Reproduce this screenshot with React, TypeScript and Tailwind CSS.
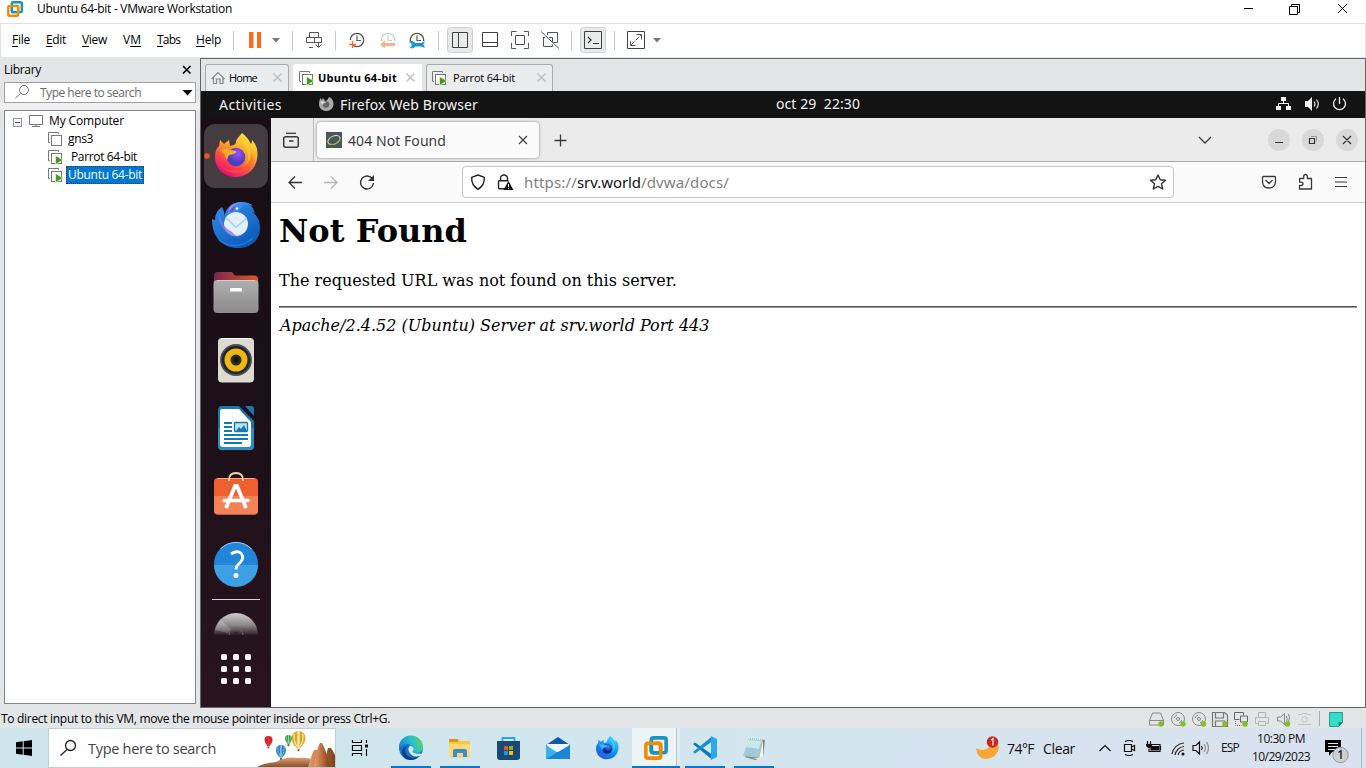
import React, { useLayoutEffect, useRef } from 'react';

const UI = "font-['Open_Sans',sans-serif]";
const GN = "font-['Noto_Sans',sans-serif]";

/* Text whose letter spacing is tuned so that it spans w pixels. */
function Fit({ w, className = '', children }: { w: number; className?: string; children: React.ReactNode }) {
  const box = useRef<HTMLSpanElement>(null);
  useLayoutEffect(() => {
    const el = box.current;
    if (!el) return;
    const tune = () => {
      el.style.letterSpacing = '0px';
      const n = (el.textContent || '').length;
      const natural = el.getBoundingClientRect().width;
      el.style.letterSpacing = `${(w - natural) / n}px`;
    };
    tune();
    document.fonts?.ready.then(tune);
  }, [w]);
  return (
    <span ref={box} className={`inline-block shrink-0 whitespace-pre ${className}`}>
      {children}
    </span>
  );
}

/* Icon cell: its drawing uses window coordinates through the viewBox. */
function Ic({ b, className = '', children }: { b: [number, number, number, number]; className?: string; children?: React.ReactNode }) {
  return (
    <svg width={b[2]} height={b[3]} viewBox={b.join(' ')} fill="none" className={`block shrink-0 ${className}`}>
      {children}
    </svg>
  );
}

const Clock = ({ x, c }: { x: number; c: string }) => (
  <>
    <circle cx={x} cy="40" r="6.7" stroke={c} strokeWidth="1.3" />
    <path d={`M${x} 35.5V40.5H${x + 4}`} stroke={c} strokeWidth="1.2" />
  </>
);

function Stack({ x, y, run = true }: { x: number; y: number; run?: boolean }) {
  return (
    <>
      <path d={`M${x + 2} ${y + 10.5}H${x + 0.5}V${y + 0.5}H${x + 10.5}V${y + 2}`} stroke="#777" />
      <rect x={x + 3.5} y={y + 3.5} width="10" height="10" fill="#fff" stroke="#777" />
      {run && <path d={`M${x + 7.5} ${y + 5.5}L${x + 15} ${y + 10}L${x + 7.5} ${y + 14.5}Z`} fill="#3f9c12" stroke="#fff" strokeWidth="0.6" />}
    </>
  );
}

const VmLogo = ({ x, y, s }: { x: number; y: number; s: number }) => (
  <g transform={`translate(${x} ${y}) scale(${s})`} strokeWidth="3.3">
    <rect x="6.7" y="1.7" width="13.6" height="13.6" rx="2" stroke="#1795c5" />
    <rect x="1.7" y="6.7" width="13.6" height="13.6" rx="2" stroke="#f38b00" />
    <path d="M6.7 8.4V13.3Q6.700 15.300 8.700 15.300H13.600" stroke="#1795c5" />
    <path d="M10 6.700H13.300Q15.300 6.700 15.300 8.700V13.600" stroke="#f38b00" />
  </g>
);

const FoxBody = ({ blue = false }: { blue?: boolean }) => (
  <>
    <defs>
      <linearGradient id={blue ? 'fb' : 'fo'} x1="0.85" y1="0.05" x2="0.3" y2="1">
        <stop offset="0" stopColor={blue ? '#37dbff' : '#ffe93e'} />
        <stop offset="0.45" stopColor={blue ? '#159cf5' : '#ff9a28'} />
        <stop offset="0.75" stopColor={blue ? '#1275e8' : '#ff3d4b'} />
        <stop offset="1" stopColor={blue ? '#3b4ed8' : '#e60a78'} />
      </linearGradient>
      <radialGradient id={blue ? 'gb' : 'go'} cx="0.6" cy="0.3">
        <stop offset="0" stopColor={blue ? '#3e8df5' : '#a44bff'} />
        <stop offset="1" stopColor={blue ? '#16218e' : '#4b3fc0'} />
      </radialGradient>
    </defs>
    <path d="M27 0C32 4 34 7 36 11C37 10 37 8 37 7C43 13 43 21 42 26C40 37 31 44 21 44C9 44 0 35 0 24C0 18 2 15 4 13L5 7L9 11L14 7L15 13C20 12 21 11 21 8C22 5 25 3 27 0Z" fill={blue ? 'url(#fb)' : 'url(#fo)'} />
    <circle cx="21" cy="24" r="9.3" fill={blue ? 'url(#gb)' : 'url(#go)'} />
    <path d="M5 17C11 15 16 17 21 18C22 20 19 21 15 22C13 22 13 24 12 27C10 24 11 21 5 17Z" fill={blue ? '#35bcff' : '#ffac24'} />
    <path d="M3 29C8 37 20 41 30 34C36 30 37 23 34 17C39 23 40 32 33 37C22 44 8 39 3 29Z" fill={blue ? '#158eff' : '#ff5b3c'} opacity=".5" />
    <path d="M27 2C26 9 32 13 33 20C34 24 33 29 30 32C37 27 37 17 33 12C30 8 28 6 27 2Z" fill={blue ? '#58e2ff' : '#ffd92e'} opacity=".7" />
  </>
);

const Sep = ({ x, y, h }: { x: number; y: number; h: number }) => <path d={`M${x + 0.5} ${y}v${h}`} stroke="#c9c9c9" />;

function Title() {
  return (
    <div className={`flex h-[23px] shrink-0 bg-white text-[12px] leading-[18px] text-black ${UI}`}>
      <Ic b={[0, 0, 37, 23]}><VmLogo x={7} y={1} s={0.73} /></Ic>
      <Fit w={195}>Ubuntu 64-bit - VMware Workstation</Fit>
      <div className="flex-1" />
      <Ic b={[1230, 0, 136, 23]}>
        <path d="M1244 8.500h9" stroke="#000" />
        <path d="M1289.500 6.500h8v8h-8zM1291.500 6v-1.500h8v8h-2" stroke="#000" />
        <path d="M1338 4l9 9M1347 4l-9 9" stroke="#000" />
      </Ic>
    </div>
  );
}

function Toolbar() {
  const m = 'leading-[32px]';
  return (
    <div className={`flex h-[34px] shrink-0 border border-b-0 border-[#e0e0e0] bg-white text-[12px] text-black ${UI}`}>
      <Fit w={18} className={`ml-[11px] ${m}`}><u className="underline-offset-2">F</u>ile</Fit>
      <Fit w={20} className={`ml-4 ${m}`}><u className="underline-offset-2">E</u>dit</Fit>
      <Fit w={25} className={`ml-4 ${m}`}><u className="underline-offset-2">V</u>iew</Fit>
      <Fit w={18} className={`ml-4 ${m}`}>V<u className="underline-offset-2">M</u></Fit>
      <Fit w={23} className={`ml-4 ${m}`}><u className="underline-offset-2">T</u>abs</Fit>
      <Fit w={25} className={`ml-4 ${m}`}><u className="underline-offset-2">H</u>elp</Fit>
      <Ic b={[221, 24, 79, 33]}>
        <Sep x={233} y={31} h={19} />
        <path d="M249 32h4.500v16h-4.500zM257 32h4v16h-4z" fill="#ff681c" />
        <path d="M272 38h8l-4 4.500z" fill="#777" />
        <Sep x={292} y={31} h={19} />
      </Ic>
      <Ic b={[300, 24, 42, 33]}>
        <path d="M309.500 37v-4.500h9v4.500M306.500 37.500h15v5h-15zM314.500 37.500v5M318.500 42v5M309 47.500h4M315.500 44.500l3 3 3-3" stroke="#555" />
        <Sep x={335} y={31} h={19} />
      </Ic>
      <Ic b={[342, 24, 30, 33]}>
        <Clock x={357} c="#555" />
        <path d="M347 40h6v9h-6z" fill="#fff" />
        <path d="M349 44.500h7M352.500 41v7" stroke="#ff681c" strokeWidth="1.400" />
      </Ic>
      <Ic b={[372, 24, 30, 33]}>
        <Clock x={388} c="#ccc" />
        <path d="M379 41h18v7h-18z" fill="#fff" />
        <path d="M380 44.500l5-4v2.500h10v3h-10v2.500z" fill="#ffae83" />
      </Ic>
      <Ic b={[402, 24, 44, 33]}>
        <Clock x={417} c="#555" />
        <path d="M408 41h18v8h-18z" fill="#fff" />
        <path d="M409.500 41h3l3 2h6l3-2v2l-1.500 1.500 1.500 1.500v2l-3-1.500h-6l-3 2-3-.5 2-1.500v-3l-2-1z" fill="#1995dc" />
        <Sep x={438} y={31} h={19} />
      </Ic>
      <Ic b={[446, 24, 130, 33]}>
        <rect x="447.500" y="27.500" width="25" height="25" rx="3" fill="#e9ebeb" stroke="#d0d0d0" />
        <path d="M452.500 32.500h15v15h-15zM458.500 32v16" stroke="#414141" />
        <path d="M482.500 32.500h15v14h-15zM482 42.500h16" stroke="#414141" />
        <path d="M511.500 36v-4.500h5M524 31.500h4.500v4.500M528.500 43v5.500h-4.500M516 48.500h-4.500v-5.500M515.500 35.500h9v9h-9z" stroke="#555" />
        <path d="M547.500 35v-2.500h10v10h-4M549 37.500h3.500v5M543.500 37v9.500h9v-2M543 37.500h2M541 31.500l18 17" stroke="#485760" />
        <Sep x={571} y={31} h={19} />
      </Ic>
      <Ic b={[576, 24, 100, 33]}>
        <rect x="580.500" y="27.500" width="25" height="25" rx="3" fill="#e9ebeb" stroke="#d0d0d0" />
        <path d="M584.500 31.500h17v17h-17z" stroke="#414141" /><path d="M588 37l3 3-3 3M593 43.500h6" stroke="#333" strokeWidth="1.200" />
        <Sep x={614} y={31} h={19} />
        <path d="M627.500 31.500h17v17h-17z" stroke="#414141" />
        <path d="M631 45l10-10" stroke="#555" strokeDasharray="5 1.500" /><path d="M636.500 34.500h5v5M630.500 41v4.500h5" stroke="#555" />
        <path d="M653 38h8l-4 4.500z" fill="#777" />
      </Ic>
    </div>
  );
}

function Library() {
  return (
    <div className={`flex w-[200px] shrink-0 flex-col bg-[#e3e5e7] text-[12px] text-black ${UI}`}>
      <div className="flex h-[25px] shrink-0 pl-1 leading-[26px]">
        <Fit w={37}>Library</Fit>
        <div className="flex-1" />
        <Ic b={[175, 57, 25, 25]}><path d="M183 66l7.500 7.500M190.500 66l-7.500 7.500" stroke="#000" strokeWidth="1.600" /></Ic>
      </div>
      <div className="ml-1 flex h-[21px] w-[192px] shrink-0 border border-[#a2a2a2] bg-white leading-[20px] text-[#6a6a6a]">
        <Ic b={[5, 83, 35, 19]}><circle cx="24" cy="90" r="4.500" stroke="#777" /><path d="M20.500 93.500l-5 4.500" stroke="#777" /></Ic>
        <Fit w={101}>Type here to search</Fit>
        <div className="flex-1" />
        <Ic b={[177, 83, 18, 19]}><path d="M182.500 90h10l-5 5.500z" fill="#000" /></Ic>
      </div>
      <div className="h-[7px] shrink-0 bg-[#f0f0f0]" />
      <div className="ml-1 flex h-[594px] w-[192px] shrink-0 flex-col border border-[#828790] bg-white pt-px">
        <div className="flex h-[18px] leading-[18px]">
          <Ic b={[5, 112, 44, 18]}>
            <rect x="13.500" y="118.500" width="8" height="8" fill="#f7f7f7" stroke="#999" /><path d="M15 122.500h5" stroke="#3156a7" />
            <path d="M29.500 115.500h13v9h-13zM36 125v2M32 126.500h8" stroke="#777" />
          </Ic>
          <Fit w={75}>My Computer</Fit>
        </div>
        <div className="flex h-[18px] leading-[18px]">
          <Ic b={[5, 130, 63, 18]}><Stack x={48} y={132} run={false} /></Ic>
          <Fit w={25}>gns3</Fit>
        </div>
        <div className="flex h-[18px] leading-[18px]">
          <Ic b={[5, 148, 66, 18]}><Stack x={48} y={150} /></Ic>
          <Fit w={66}>Parrot 64-bit</Fit>
        </div>
        <div className="flex h-[18px] leading-[16px]">
          <Ic b={[5, 166, 61, 18]}><Stack x={48} y={168} /></Ic>
          <div className="h-[18px] w-[78px] border border-dotted border-[#4a3a20] bg-[#0078d7] pl-px text-white"><Fit w={74}>Ubuntu 64-bit</Fit></div>
        </div>
      </div>
    </div>
  );
}

const TabX = ({ x }: { x: number }) => <path d={`M${x} 73.500l8 8M${x + 8} 73.500l-8 8`} stroke="#c4c4c4" strokeWidth="1.700" />;

function VmTabs() {
  const t = 'h-[27px] flex shrink-0 rounded-t-[3px] border border-b-0 leading-[26px]';
  return (
    <div className={`flex h-8 shrink-0 bg-[#e3e4e6] pl-1 pt-[5px] text-[11px] text-black ${UI}`}>
      <div className={`${t} w-[84px] border-[#a9abad] bg-[#ebecee]`}>
        <Ic b={[206, 65, 23, 26]}><path d="M211.500 79l6.500-6.500 6.500 6.500M213.500 77.500v6h3v-4.500h3.500v4.500h3v-6" stroke="#888" strokeWidth="1.200" /></Ic>
        <Fit w={28}>Home</Fit>
        <Ic b={[257, 65, 28, 26]}><TabX x={273.500} /></Ic>
      </div>
      <div className={`${t} ml-1 w-[129px] border-white bg-white font-bold`}>
        <Ic b={[294, 65, 24, 26]}><Stack x={299} y={71} /></Ic>
        <Fit w={79}>Ubuntu 64-bit</Fit>
        <Ic b={[397, 65, 24, 26]}><TabX x={406.500} /></Ic>
      </div>
      <div className={`${t} ml-1 w-[127px] border-[#a9abad] bg-[#ebecee]`}>
        <Ic b={[427, 65, 26, 26]}><Stack x={432} y={71} /></Ic>
        <Fit w={62}>Parrot 64-bit</Fit>
        <Ic b={[515, 65, 36, 26]}><TabX x={537.500} /></Ic>
      </div>
    </div>
  );
}

function TopBar() {
  return (
    <div className={`flex h-[27px] shrink-0 bg-[#131313] text-[14px] leading-[27px] text-[#f2f2f2] ${GN}`}>
      <Fit w={63} className="ml-[18px]">Activities</Fit>
      <Ic b={[282, 91, 58, 27]}>
        <path d="M329 97c3 1 4.500 4 4.500 7 0 4-3 7-7.200 7s-7.300-3-7.300-7c0-3 1-4 1-6l2 2 1-2 2 3c2 0 3-2 4-4z" fill="#aaa" />
        <circle cx="326" cy="104.500" r="3.300" fill="#666" /><path d="M320 102c2-1 4 0 6 0-1 1-3 1-3 3-1-1-1-2-3-3z" fill="#ddd" />
      </Ic>
      <Fit w={138}>Firefox Web Browser</Fit>
      <Fit w={84} className="ml-[298px] leading-[26px]">oct 29  22:30</Fit>
      <div className="flex-1" />
      <Ic b={[1265, 91, 100, 27]}>
        <path d="M1281 97h5v4h-5zM1276 106h5v4h-5zM1286 106h5v4h-5z" fill="#f2f2f2" /><path d="M1283.500 101v3M1278.500 107v-3.500h10v3.500" stroke="#f2f2f2" />
        <path d="M1305 101h3l4-4v14l-4-4h-3z" fill="#f2f2f2" /><path d="M1314 101.500q2 2.500 0 5M1316.500 99.500q3.500 4.500 0 9" stroke="#ddd" strokeWidth="1.200" />
        <path d="M1336 98.800a6 6 0 1 0 7 0M1339.500 97v7" stroke="#f2f2f2" strokeWidth="1.300" />
      </Ic>
    </div>
  );
}

function Dock() {
  return (
    <div className="flex w-[70px] shrink-0 flex-col bg-gradient-to-b from-[#180e14] via-[#1b0f18] to-[#28141e]">
      <Ic b={[201, 118, 70, 76]}>
        <rect x="204" y="124" width="64" height="64" rx="11" fill="#453c42" />
        <circle cx="207" cy="156" r="2.800" fill="#e95420" />
        <g transform="translate(215 133)"><FoxBody /></g>
      </Ic>
      <Ic b={[201, 194, 70, 66]}>
        <defs><linearGradient id="tb" x1="0" y1="0" x2=".6" y2="1"><stop stopColor="#3590ee" /><stop offset="1" stopColor="#0c5bb9" /></linearGradient></defs>
        <path d="M212 219l3 1q0-9 7-13 3 5 2 10 3-14 16-15 12 0 15 11l-3-1q8 5 8 16c0 12-9 20-22 20-15 0-26-10-26-29z" fill="url(#tb)" />
        <path d="M228 213q1-10 13-11 8 0 12 4-7-3-11 0-2 5-7 6z" fill="#3d8df0" />
        <path d="M228 214q0-11 14-12-9 2-10 8z" fill="#9a8cf2" />
        <path d="M234 206l-6 6h5q3-3 1-6z" fill="#5e63c8" /><circle cx="237" cy="208.500" r="1.300" fill="#fff" />
        <circle cx="236" cy="224" r="12" fill="#e2f0ff" />
        <path d="M226.500 218l9.500 9.500 10.500-9.500" stroke="#a8cdf0" strokeWidth="1.600" />
        <path d="M219 212q-1 14 9 22 6 4 12 3-5-1-8-5-11-5-13-20z" fill="#8079de" opacity=".8" />
        <path d="M219 240q17 12 34-2" stroke="#2b86e8" strokeWidth="1.500" opacity=".7" />
      </Ic>
      <Ic b={[201, 260, 70, 66]}>
        <defs><linearGradient id="fd"><stop stopColor="#7b2852" /><stop offset="1" stopColor="#e2571d" /></linearGradient><linearGradient id="fg" x2="0" y2="1"><stop stopColor="#b0b0b0" /><stop offset="1" stopColor="#8b8b8b" /></linearGradient></defs>
        <path d="M214 276q0-4 4-4h14l3 3.500h19q4 0 4 4v16h-44z" fill="url(#fd)" />
        <rect x="213.500" y="280" width="45" height="33" rx="4" fill="url(#fg)" /><path d="M217 280.500h38" stroke="#d0d0d0" />
        <rect x="230" y="288" width="12" height="3.500" rx="1" fill="#fff" />
      </Ic>
      <Ic b={[201, 326, 70, 68]}>
        <rect x="218" y="338" width="36" height="44.500" rx="4" fill="#dfdbd0" /><path d="M221 338.500h30" stroke="#fff" />
        <circle cx="236" cy="360" r="16" fill="#4b4e56" /><circle cx="236" cy="360" r="14" fill="#20222b" /><circle cx="236" cy="360" r="11.500" fill="#edb90d" /><circle cx="236" cy="360" r="5.500" fill="#292929" /><circle cx="236" cy="360" r="2.500" fill="#111" />
      </Ic>
      <Ic b={[201, 394, 70, 68]}>
        <path d="M222 406h17l15 15v25q0 4-4 4h-28q-4 0-4-4v-36q0-4 4-4z" fill="#1678b0" /><path d="M218 428h36v18q0 4-4 4h-28q-4 0-4-4z" fill="#278fc6" />
        <path d="M245 406h6q3 0 3 3v7z" fill="#1678b0" />
        <path d="M222 409h17l12 13v22q0 3-3 3h-25q-3 0-3-3v-32q0-3 2-3z" fill="#fff" />
        <path d="M224 423h8M224 427h8M224 431h8M224 435h24M224 439h24M224 443h18" stroke="#1678b0" strokeWidth="1.800" />
        <rect x="234.500" y="422.500" width="13" height="9" rx="1" fill="#b8e2f6" stroke="#1678b0" strokeWidth="1.400" /><path d="M236 431l3-4 2 2 3-4 3 6z" fill="#1678b0" />
      </Ic>
      <Ic b={[201, 462, 70, 66]}>
        <rect x="214" y="478" width="44" height="36.500" rx="4" fill="#ef6031" /><path d="M214 496h44v14.500q0 4-4 4h-36q-4 0-4-4z" fill="#f48257" /><path d="M217 478.500h38" stroke="#ffa37c" />
        <path d="M229 481v-1q0-7 7-7t7 7v1" stroke="#ead5ac" strokeWidth="1.800" />
        <path d="M226 508l9-22h2l9 22" stroke="#fff" strokeWidth="3.800" /><path d="M224 500.500h24" stroke="#fff" strokeWidth="3.300" strokeLinecap="round" />
      </Ic>
      <Ic b={[201, 528, 70, 66]}>
        <circle cx="236" cy="564" r="22" fill="#2185d8" /><path d="M214 565h44a22 22 0 0 1-44 0z" fill="#3ea0e4" /><path d="M220.500 549a21.500 21.500 0 0 1 31 0" stroke="#9dcdf5" />
        <path d="M231 554q5-3.500 9-1.500 4 3 2 7.500-1 2-4 4.500-2 2-2 5" stroke="#fff" strokeWidth="2.800" /><circle cx="236" cy="575.500" r="2.500" fill="#fff" />
      </Ic>
      <Ic b={[201, 594, 70, 50]}>
        <defs><linearGradient id="cd" x2="0" y2="1"><stop stopColor="#cfcfcf" /><stop offset=".55" stopColor="#8c8789" /><stop offset="1" stopColor="#2c1d25" /></linearGradient></defs>
        <path d="M212 599.500h48" stroke="#d8d4d6" />
        <path d="M214 635a22 22 0 0 1 44 0z" fill="url(#cd)" /><path d="M220 619l11 10-3 4-13-3z" fill="#fff" opacity=".2" />
        <path d="M229 635a7 7 0 0 1 14 0" stroke="#6c6467" /><path d="M233 635a3 3 0 0 1 6 0z" fill="#30242a" />
      </Ic>
      <Ic b={[201, 644, 70, 63]}>
        {[221, 233, 245].map((x) => [654, 666, 678].map((y) => <rect key={`${x}-${y}`} x={x} y={y} width="6" height="6" rx="1.500" fill="#f4f2f2" />))}
      </Ic>
    </div>
  );
}

function Browser() {
  return (
    <div className="flex flex-1 flex-col bg-white">
      <div className={`flex h-11 shrink-0 border-b border-[#a9a9a9] bg-[#ebebeb] text-[14px] text-[#3d3d3d] ${GN}`}>
        <Ic b={[271, 118, 46, 43]}>
          <path d="M286 133.300h10" stroke="#3a3a3a" strokeWidth="1.300" />
          <path d="M283.700 138.500q0-1.800 2-1.800h10.600q2 0 2 1.800v6.700q0 2-2 2h-10.600q-2 0-2-2zM289 141h4.500" stroke="#3a3a3a" strokeWidth="1.500" />
          <path d="M313.500 118v43" stroke="#bdbdbd" />
        </Ic>
        <div className="mt-[4px] flex h-[36px] w-[222px] shrink-0 rounded-[4px] bg-[#fbfbfb] leading-[38px] shadow-[0_0_3px_rgba(0,0,0,0.45)]">
          <Ic b={[317, 122, 31, 36]}>
            <path d="M326 132h16v16h-16z" fill="#4c555a" /><ellipse cx="334" cy="140" rx="6.500" ry="4" transform="rotate(-25 334 140)" stroke="#d8ddb8" /><path d="M329 144q7 2 11-4" stroke="#96a93e" />
          </Ic>
          <Fit w={98}>404 Not Found</Fit>
          <Ic b={[446, 122, 93, 36]}><path d="M519 136l8 8M527 136l-8 8" stroke="#3a3a3a" strokeWidth="1.100" /></Ic>
        </div>
        <Ic b={[539, 118, 41, 43]}><path d="M554.500 140.500h12M560.500 134.500v12" stroke="#3a3a3a" strokeWidth="1.300" /></Ic>
        <div className="flex-1" />
        <Ic b={[1190, 118, 175, 43]}>
          <path d="M1199 137l6 6 6-6" stroke="#3a3a3a" strokeWidth="1.300" />
          <g fill="#d9d9d9"><circle cx="1279" cy="140" r="11" /><circle cx="1313" cy="140" r="11" /><circle cx="1347" cy="140" r="11" /></g>
          <path d="M1275 142.500h8M1309.500 138.500h5v5h-5zM1343 136l8 8M1351 136l-8 8" stroke="#333" strokeWidth="1.200" /><path d="M1311 136.500h5.500v5" stroke="#999" />
        </Ic>
      </div>
      <div className={`flex h-[41px] shrink-0 border-b border-[#ccc] bg-[#fbfbfb] text-[15px] text-[#808080] ${GN}`}>
        <Ic b={[271, 162, 191, 40]}>
          <path d="M302 182.500h-13M295 176.500l-6 6 6 6" stroke="#333" strokeWidth="1.300" />
          <path d="M324 182.500h13M331 176.500l6 6-6 6" stroke="#b5b5b5" strokeWidth="1.300" />
          <path d="M372.500 179a6.500 6.500 0 1 0 1 4" stroke="#333" strokeWidth="1.400" /><path d="M374 175v6h-6z" fill="#333" />
        </Ic>
        <div className="mt-1 flex h-8 w-[712px] shrink-0 rounded-[4px] border border-[#c6c6c6] bg-white leading-[31px]">
          <Ic b={[463, 167, 61, 30]}>
            <path d="M478 175l6.300 2.300q.5 8-6.300 12-6.800-4-6.300-12z" stroke="#222" strokeWidth="1.400" strokeLinejoin="round" />
            <path d="M500.500 181v-2.500a3.500 3.500 0 0 1 7 0v2.500M505.500 188.800h-6q-1 0-1-1v-6q0-1 1-1h9" stroke="#222" strokeWidth="1.400" /><path d="M508.500 181l5 9h-10z" fill="#111" /><path d="M508.500 184v3M508.500 188v1" stroke="#fff" />
          </Ic>
          <Fit w={53}>https://</Fit><Fit w={64} className="text-[#111]">srv.world</Fit><Fit w={88}>/dvwa/docs/</Fit>
          <div className="flex-1" />
          <Ic b={[1143, 167, 30, 30]}><path d="M1158 175l2.200 4.800 5.300.5-4 3.500 1.200 5.200-4.700-2.700-4.700 2.700 1.200-5.200-4-3.500 5.300-.5z" stroke="#333" strokeWidth="1.400" strokeLinejoin="round" /></Ic>
        </div>
        <div className="flex-1" />
        <Ic b={[1250, 162, 115, 40]}>
          <path d="M1263.500 176.500h11q1 0 1 1v3.500q0 7-6.500 7t-6.500-7v-3.500q0-1 1-1zM1265.500 180l3.500 3.500 3.500-3.500" stroke="#3a3a3a" strokeWidth="1.300" strokeLinejoin="round" />
          <path d="M1299.700 178.500h4v-2q0-2 1.800-2t1.800 2v2h4.200v10.500h-12v-3.500h1.500q2 0 2-1.700t-2-1.700h-1.500z" stroke="#3a3a3a" strokeWidth="1.300" strokeLinejoin="round" />
          <path d="M1335 177.500h12M1335 182h12M1335 186.500h12" stroke="#3a3a3a" strokeWidth="1.200" />
        </Ic>
      </div>
      <div className="flex flex-col px-2 pt-[9px] font-['DejaVu_Serif',serif] text-[16px] leading-[19px] text-black">
        <Fit w={188} className="self-start text-[32px] leading-[38px] font-bold">Not Found</Fit>
        <p className="mt-[21px]">The requested URL was not found on this server.</p>
        <div className="mt-4 h-[2px] border-t border-[#555] bg-[#999]" />
        <p className="mt-2 pl-px italic">Apache/2.4.52 (Ubuntu) Server at srv.world Port 443</p>
      </div>
    </div>
  );
}

const Dot = ({ x }: { x: number }) => <circle cx={x} cy="724" r="2.700" fill="#7cc41c" />;

function Status() {
  return (
    <div className={`flex h-5 shrink-0 bg-[#e3e5e7] pl-px text-[12px] leading-[21px] text-black ${UI}`}>
      <Fit w={389}>To direct input to this VM, move the mouse pointer inside or press Ctrl+G.</Fit>
      <div className="flex-1" />
      <Ic b={[1144, 708, 222, 20]}>
        <path d="M1149.500 720.500l3-7.500h8l3 7.500v4.500h-14zM1149 720.500h15" stroke="#888" />
        {[1178, 1199].map((x) => <g key={x} stroke="#888"><circle cx={x} cy="719" r="6.500" /><circle cx={x} cy="719" r="1.500" /><path d={`M${x - 4} 718q1-2 3-3M${x + 4} 720q-1 2-3 3`} /></g>)}
        <path d="M1212.500 712.500h12l3 2.500v11.500h-15zM1215.500 713v5h8v-5M1215.500 726v-5h9v5" stroke="#777" strokeWidth="1.200" />
        <path d="M1240.500 716h7v6h-7zM1234.500 712.500h9v3M1234.500 712.500v7h5" stroke="#666" /><path d="M1235.500 721v4.500h6" stroke="#666" strokeDasharray="1 1" />
        <path d="M1258.500 717v-4.500h7v4.500M1258 723.500h-2.500v-6h13v6h-2.500M1258.500 721.500h7v4h-7z" stroke="#b6b6b6" />
        <path d="M1277.500 717h3l4-3.500v11l-4-3.500h-3zM1286.500 716q1 3 0 6M1288.500 714q2 3 0 8" stroke="#888" />
        <path d="M1298 714.500h4v-1h5v1h4M1298 724.500h13" stroke="#c5c5c5" /><circle cx="1304.500" cy="719.500" r="2.700" stroke="#c5c5c5" />
        <Dot x={1161} /><Dot x={1183} /><Dot x={1203.500} /><Dot x={1225} /><Dot x={1245} /><Dot x={1287.500} />
        <path d="M1319.500 711v15" stroke="#aaa" /><path d="M1329.500 712.500h13v9.500l-4 4.500h-9z" fill="#35dec8" stroke="#2a9d91" /><path d="M1343 722h-4.500v4.500z" fill="#10877b" />
      </Ic>
    </div>
  );
}

const Balloon = ({ x, y, r, c, s }: { x: number; y: number; r: number; c: string; s: string }) => (
  <>
    <path d={`M${x - r} ${y}a${r} ${r} 0 0 1 ${2 * r} 0q0 ${r * 0.8} -${r - 1} ${r * 1.5}h-2q-${r - 1} -${r * 0.7} -${r - 1} -${r * 1.5}z`} fill={c} />
    <path d={`M${x} ${y - r}v${r * 2.4}`} stroke={s} strokeWidth={r / 3} />
    <path d={`M${x - r * 0.6} ${y - r * 0.6}q-${r * 0.2} ${r} ${r * 0.4} ${r * 1.8}M${x + r * 0.6} ${y - r * 0.6}q${r * 0.2} ${r} -${r * 0.4} ${r * 1.8}`} stroke={s} strokeWidth={r / 6} />
    <path d={`M${x} ${y + r * 1.6}v2`} stroke="#8b5a2c" strokeWidth="2" />
  </>
);

function Taskbar() {
  return (
    <div className={`flex h-10 shrink-0 bg-gradient-to-r from-[#cde6ee] via-[#d3e6f0] to-[#dae2f0] text-[#111] ${UI}`}>
      <Ic b={[0, 728, 48, 40]}><path d="M16 742.300l6.700-1v6.200h-6.700zM23.700 741.200l8.300-1.200v7.500h-8.300zM16 748.500h6.700v6.200l-6.700-1zM23.700 748.500h8.300v7.500l-8.300-1.200z" fill="#000" /></Ic>
      <div className="flex h-10 w-72 shrink-0 border border-[#c3ccd0] bg-white text-[14.5px] leading-[39px] text-[#444]">
        <Ic b={[49, 729, 39, 38]}><circle cx="70.500" cy="745.500" r="5" stroke="#222" strokeWidth="1.300" /><path d="M67 749.500l-6.500 6" stroke="#222" strokeWidth="1.300" /></Ic>
        <Fit w={128}>Type here to search</Fit>
        <Ic b={[216, 729, 119, 38]}>
          <defs><linearGradient id="hill" x2="0" y2="1"><stop stopColor="#d6a07a" /><stop offset="1" stopColor="#8a4419" /></linearGradient><linearGradient id="rock"><stop stopColor="#e2a070" /><stop offset=".5" stopColor="#b96d3f" /><stop offset="1" stopColor="#7d3e1c" /></linearGradient></defs>
          <Balloon x={288.500} y={738.500} r={3.500} c="#2e9c50" s="#9bdc8e" />
          <Balloon x={268.500} y={740} r={4} c="#d3202c" s="#e8323c" />
          <Balloon x={281} y={750} r={5} c="#2b7fbe" s="#80c8ec" />
          <Balloon x={298.500} y={738} r={7} c="#dca730" s="#fae9a8" />
          <path d="M256 768q6-5 20-6 10-6 22-4 12-1 20 4l17 6z" fill="url(#hill)" />
          <path d="M308 768q3-12 6-18l3 0q3 7 4 18zM324 768q2-14 4-20h3l4 7v13z" fill="url(#rock)" />
          <path d="M314 768q1-16 6-25h2q5 9 8 25z" fill="url(#rock)" />
        </Ic>
      </div>
      <Ic b={[336, 728, 50, 40]}><path d="M352.500 740v2.500h9v-2.500M352.500 756v-2.500h9v2.500M352.500 745.500h9v5h-9zM366.500 740v3M366.500 749v7" stroke="#111" strokeWidth="1.200" /><path d="M365 744.500h3v3h-3z" fill="#111" /></Ic>
      <Ic b={[386, 728, 50, 40]}>
        <defs><linearGradient id="ed" x1="0" y1=".5" x2="1" y2=".2"><stop stopColor="#1289d8" /><stop offset=".55" stopColor="#2dbfca" /><stop offset="1" stopColor="#63dc4e" /></linearGradient></defs>
        <circle cx="411" cy="748" r="12" fill="#1278cd" />
        <path d="M399 748a12 12 0 0 1 24-1q0 6-7 6-5 0-3-3 1-5-5-6-6 0-9 4z" fill="url(#ed)" />
        <path d="M407 746q-4 6 1 10t12-1q-4 5-10 5-8-1-8-8 0-5 5-6z" fill="#103f7e" /><path d="M410 745.500q-2 2-1.500 5 2 6 8.500 6 3 0 6-3-6 1-10-1-1-1 0-2 2-3-3-5z" fill="#d6e8f1" />
        <path d="M391 767h40" stroke="#0078d7" strokeWidth="2" />
      </Ic>
      <Ic b={[436, 728, 48, 40]}><path d="M449 739h10l1 2h10v16h-21z" fill="#f7c748" /><path d="M449 744h21v12h-21z" fill="#ffda70" /><path d="M449 739h9v3h-9z" fill="#d99411" /><path d="M453 757v-6q0-2 2-2h10q2 0 2 2v6h-4v-4h-6v4z" fill="#398bd3" /><path d="M440 767h40" stroke="#0078d7" strokeWidth="2" /></Ic>
      <Ic b={[484, 728, 48, 40]}><path d="M502.500 743v-5h12v5" stroke="#29a8e0" strokeWidth="1.800" /><path d="M497 741h23v16q0 3-3 3h-17q-3 0-3-3z" fill="#1b4773" /><path d="M504 746h4v4h-4z" fill="#f25022" /><path d="M509 746h4v4h-4z" fill="#7fba00" /><path d="M504 751h4v4h-4z" fill="#00a4ef" /><path d="M509 751h4v4h-4z" fill="#ffb900" /></Ic>
      <Ic b={[532, 728, 50, 40]}><path d="M546 745l12-8 12 8v14h-24z" fill="#0b5ba8" /><path d="M547 744h22v8h-22z" fill="#f3f3f3" /><path d="M546 745l12 8 12-8v14h-24z" fill="#35b3ef" /><path d="M546 759l24-14v14z" fill="#1b85d6" /></Ic>
      <Ic b={[582, 728, 50, 40]}><g transform="translate(596 736) scale(.53)"><FoxBody blue /></g></Ic>
      <Ic b={[632, 728, 48, 40]}><path d="M632 728h44v40h-44z" fill="#edf4f8" /><path d="M677 728h3v40h-3z" fill="#e1edf4" /><path d="M676.500 728v40" stroke="#b9c9d2" /><VmLogo x={644} y={736} s={1.09} /><path d="M632 767h48" stroke="#0078d7" strokeWidth="2" /></Ic>
      <Ic b={[680, 728, 50, 40]}><path d="M693 744l2-1.500 17 12v5z" fill="#0c77bb" /><path d="M693 752l2 1.500 17-12v-5z" fill="#168dcf" /><path d="M711 736l6 3v18l-6 3z" fill="#2da8ec" /><path d="M685 767h40" stroke="#0078d7" strokeWidth="2" /></Ic>
      <Ic b={[730, 728, 48, 40]}><path d="M750 738l15 2-2 17-8 3-10-3z" fill="#8a8375" /><path d="M749 738l14 1-4 19-16-2z" fill="#9fcbd2" /><path d="M748 740l13 1-2 8-13-2z" fill="#cce9ea" /><path d="M763 740l-4 18-8 0 8 1 4-2z" fill="#f2f2ef" /><path d="M749 738.500l14 1" stroke="#eee" strokeDasharray="1 1" strokeWidth="2" /><path d="M734 767h40" stroke="#0078d7" strokeWidth="2" /></Ic>
      <div className="flex-1" />
      <Ic b={[970, 728, 37, 40]}>
        <path d="M991 740q0 9-8 10-4 0-7-2 1 11 10 11 11-1 13-11 0-6-8-8z" fill="#f7a735" /><circle cx="992.500" cy="742" r="5.800" fill="#c42b1c" /><path d="M991 740l2-1.500v7" stroke="#fff" strokeWidth="1.100" />
      </Ic>
      <Fit w={27} className="text-[14px] leading-[41px]">74°F</Fit><Fit w={32} className="ml-[9px] text-[14px] leading-[41px]">Clear</Fit>
      <Ic b={[1075, 728, 146, 40]}>
        <g stroke="#111" strokeWidth="1.200">
          <path d="M1099.500 751l5.500-5.500 5.500 5.500" /><path d="M1124.500 744.500h7v7h-7zM1131.500 747l3-1.500v5l-3-1.500M1125 741.500q4-2 8 0M1125 754.500q4 2 8 0" />
          <path d="M1152 744.500h8v7h-11v-3M1147.500 741v3M1150.500 741v3M1160.500 746v4" /><path d="M1146 744h6v2l-2 2h-2l-2-2z" fill="#111" stroke="none" /><path d="M1151 746.500h7.500v3.500h-7.500z" fill="#111" />
          <path d="M1172 754a13 13 0 0 1 12-11M1175 755a10 10 0 0 1 9-8.500M1178 755a7 7 0 0 1 6-5" stroke="#333" /><circle cx="1183" cy="754" r="1.500" fill="#111" stroke="none" />
          <path d="M1193 745.500h3l3.500-3.500v12l-3.500-3.500h-3zM1201.500 746q1.500 2 0 4" /><path d="M1204 744q3 4 0 8M1206.500 742q4 6 0 12" stroke="#888" />
        </g>
      </Ic>
      <Fit w={18} className="text-[12px] leading-[40px]">ESP</Fit>
      <div className="ml-[12px] flex w-[60px] shrink-0 flex-col items-center pt-[2px] text-[12px] leading-[18px]"><Fit w={48}>10:30 PM</Fit><Fit w={58}>10/29/2023</Fit></div>
      <Ic b={[1311, 728, 55, 40]}>
        <path d="M1325 740h16v12h-9l-3 4v-4h-4z" fill="#000" /><path d="M1328 743.500h10M1328 746.500h10M1328 749.500h7" stroke="#dee4f1" />
        <circle cx="1340.500" cy="755" r="7.700" fill="#ccd0d5" stroke="#999" /><path d="M1338.500 752.500l2.500-1.700v8.200" stroke="#111" strokeWidth="1.300" /><path d="M1361.500 728v40" stroke="#aeb7c3" />
      </Ic>
    </div>
  );
}

export default function App() {
  return (
    <div className="flex h-[768px] w-[1366px] flex-col overflow-hidden bg-[#e3e5e7]">
      <Title />
      <Toolbar />
      <div className="flex h-[651px] shrink-0">
        <Library />
        <div className="mt-px flex flex-1 flex-col border border-[#636568]">
          <VmTabs />
          <TopBar />
          <div className="flex min-h-0 flex-1">
            <Dock />
            <Browser />
          </div>
        </div>
      </div>
      <Status />
      <Taskbar />
    </div>
  );
}
